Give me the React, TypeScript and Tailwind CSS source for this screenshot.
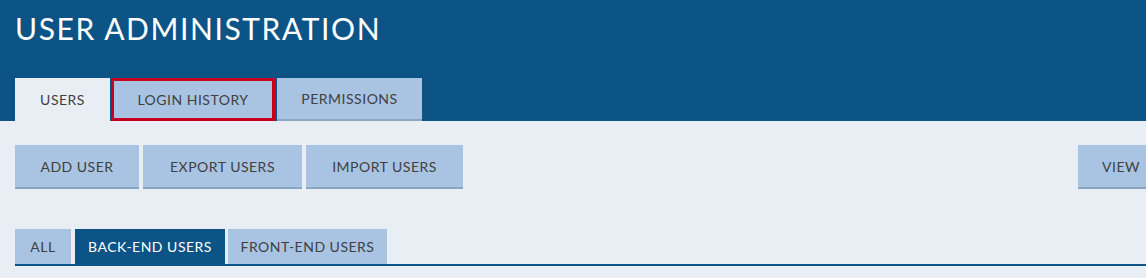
const topTabs = [
  { label: 'USERS', width: 'w-[95px]', state: 'active' },
  { label: 'LOGIN HISTORY', width: 'w-[164px]', state: 'focused' },
  { label: 'PERMISSIONS', width: 'w-[145px]', state: 'idle' },
];

const actions = [
  { label: 'ADD USER', width: 'w-[124px]' },
  { label: 'EXPORT USERS', width: 'w-[159px]' },
  { label: 'IMPORT USERS', width: 'w-[157px]' },
];

const filters = [
  { label: 'ALL', width: 'w-[56px]', active: false },
  { label: 'BACK-END USERS', width: 'w-[150px]', active: true },
  { label: 'FRONT-END USERS', width: 'w-[159px]', active: false },
];

export default function App() {
  return (
    <div className="h-[278px] w-[1146px] overflow-hidden bg-[#e8eef3] font-['Lato','Noto_Sans',sans-serif]">
      <header className="bg-[#0c5386] px-[15px]">
        <h1 className="pt-[8px] text-[30px] leading-[40px] tracking-[1.6px] text-white">
          USER ADMINISTRATION
        </h1>
        <nav className="mt-[30px] flex h-[43px]">
          {topTabs.map((tab, i) => (
            <button
              type="button"
              key={tab.label}
              className={`flex h-full items-center justify-center text-[14px] tracking-[0.5px] text-[#404040] ${tab.width} ${
                i === 1 ? 'ml-[1px]' : i === 2 ? 'ml-[2px]' : ''
              } ${
                tab.state === 'active'
                  ? 'bg-[#e8eef3]'
                  : tab.state === 'focused'
                    ? 'border-[3px] border-[#c8001e] bg-[#a8c4e2]'
                    : 'border-b-2 border-[#8ba6c3] bg-[#a8c4e2]'
              }`}
            >
              {tab.label}
            </button>
          ))}
        </nav>
      </header>

      <div className="pl-[15px] pt-[24px]">
        <div className="flex h-[44px]">
          <div className="flex gap-[4px]">
            {actions.map((a) => (
              <button
                type="button"
                key={a.label}
                className={`flex h-full items-center justify-center border-b-2 border-[#8ba6c3] bg-[#a8c4e2] text-[14px] tracking-[0.5px] text-[#404040] ${a.width}`}
              >
                {a.label}
              </button>
            ))}
          </div>
          <button
            type="button"
            className="ml-auto flex h-full w-[68px] items-center border-b-2 border-[#8ba6c3] bg-[#a8c4e2] pl-[24px] text-[14px] tracking-[0.5px] text-[#404040]"
          >
            VIEW
          </button>
        </div>

        <div className="mt-[40px] flex h-[37px] border-b-2 border-[#0c5386]">
          {filters.map((f, i) => (
            <button
              type="button"
              key={f.label}
              className={`flex h-full items-center justify-center text-[14px] tracking-[0.5px] ${f.width} ${
                i === 1 ? 'ml-[4px]' : i === 2 ? 'ml-[3px]' : ''
              } ${f.active ? 'bg-[#0c5386] text-white' : 'bg-[#a8c4e2] text-[#404040]'}`}
            >
              {f.label}
            </button>
          ))}
        </div>
      </div>
    </div>
  );
}
